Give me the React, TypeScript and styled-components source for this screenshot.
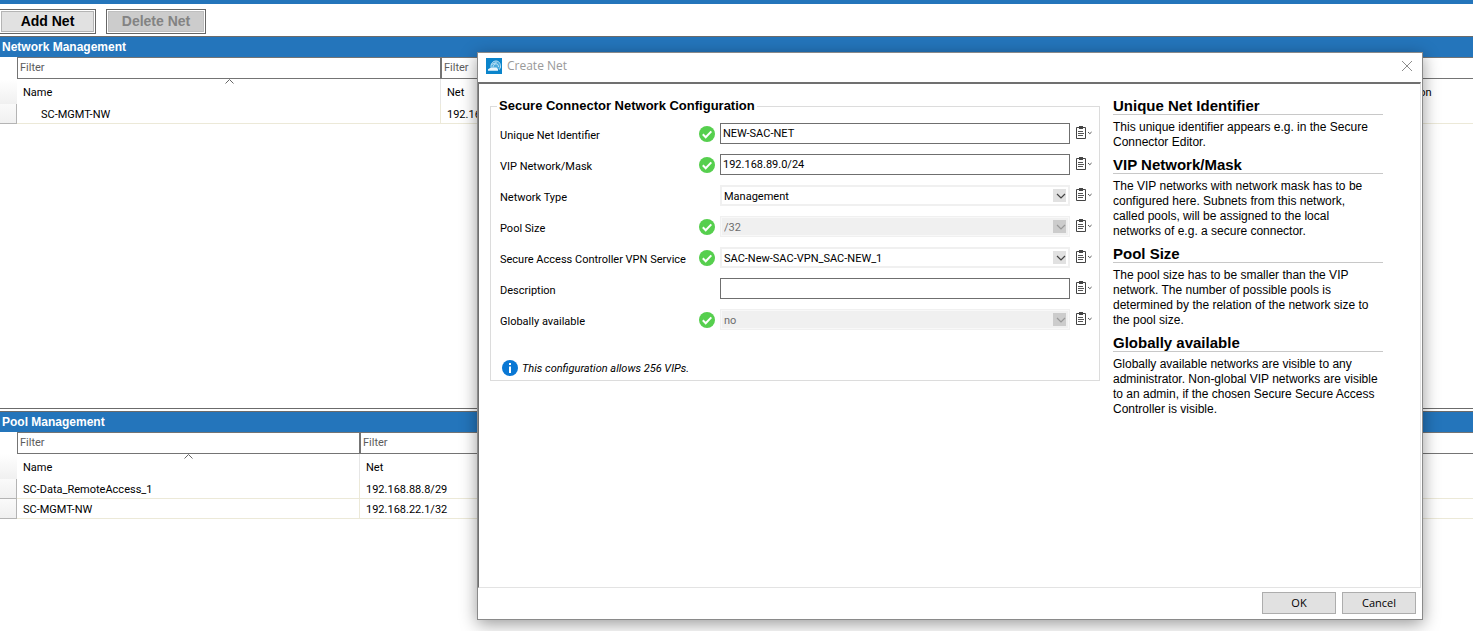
import React from "react";
import styled, { createGlobalStyle, css } from "styled-components";

const UI = `Roboto, "Liberation Sans", sans-serif`;
const HELP = `"Liberation Sans", Arial, sans-serif`;
const SYSTEM = `"Open Sans", "Noto Sans", sans-serif`;

const GlobalStyle = createGlobalStyle`
  *, *::before, *::after { box-sizing: border-box; }
  body { margin: 0; background: #fff; color: #000; font: 11px/15px ${UI}; overflow: hidden; }
  button, input, select { font: inherit; color: inherit; margin: 0; border-radius: 0; }
  table { border-collapse: separate; border-spacing: 0; }
`;

const Page = styled.div`
  position: relative;
  min-height: 100vh;
  display: flex;
  flex-direction: column;
  border-top: 4px solid #2475bb;
`;

const Toolbar = styled.header`
  display: flex;
  gap: 10px;
  height: 32px;
  padding: 5px 0 2px;
`;

const ToolButton = styled.button<{ $first?: boolean }>`
  width: ${(p) => (p.$first ? 96 : 100)}px;
  padding: 0 0 1px;
  border: 1px solid #666;
  border-left-width: ${(p) => (p.$first ? 0 : 1)}px;
  background: #e1e1e1;
  box-shadow: inset 0 0 0 1px #fff, inset 0 0 0 2px #b4b4b4;
  font: bold 14px/16px ${HELP};
  &:disabled { background: #ccc; color: #838383; box-shadow: inset 0 0 0 1px #fff, inset 0 0 0 2px #bfbfbf; }
`;

const Panel = styled.section<{ $tall?: boolean }>`
  border-top: 1px solid #6b6b6b;
  ${(p) => p.$tall && css`height: 373px; border-bottom: 1px solid #6b6b6b; margin-bottom: 2px;`}
`;

const PanelTitle = styled.h2`
  margin: 0;
  height: 20px;
  padding-left: 2px;
  background: #2475bb;
  color: #fff;
  font: bold 12px/20px ${HELP};
`;

const Grid = styled.table`
  width: 100%;
  table-layout: fixed;
`;

const HandleCol = styled.col` width: 17px; `;
const Col = styled.col<{ $width?: number }>`
  ${(p) => p.$width && `width: ${p.$width}px;`}
`;

const FilterCell = styled.td` padding: 0; height: 22px; `;

const FilterInput = styled.input`
  display: block;
  width: 100%;
  height: 22px;
  padding: 0 2px 2px;
  border: 1px solid #747474;
  background: #fff;
  &::placeholder { color: #5c5c5c; opacity: 1; }
  ${FilterCell}:last-child & { border-right: 0; }
`;

const HeadHandle = styled.td`
  padding: 0;
  background: linear-gradient(#fff, #f0f0f0);
`;

const HeadCell = styled.th`
  position: relative;
  height: 25px;
  padding: 2px 6px 0;
  border-right: 1px solid #e6e6e6;
  text-align: left;
  font-weight: normal;
  &:last-child { border-right: 0; }
`;

const SortMark = styled.svg`
  position: absolute;
  top: 0;
  left: 50%;
  margin-left: -4px;
`;

const RowHandle = styled.td`
  padding: 0;
  border-right: 1px solid #b4b4b4;
  border-bottom: 1px solid #b4b4b4;
  background: linear-gradient(#fafafa, #f0f0f0);
`;

const Cell = styled.td<{ $indent?: boolean }>`
  height: 20px;
  padding: 1px 6px 0 ${(p) => (p.$indent ? 24 : 6)}px;
  border-right: 1px solid #ece9d8;
  border-bottom: 1px solid #ece9d8;
  &:last-child { border-right: 0; }
`;

const Dialog = styled.div`
  position: absolute;
  top: 48px;
  left: 477px;
  right: 50px;
  background: #fff;
  outline: 1px solid #8a8a8a;
  outline-offset: -1px;
  box-shadow: 0 4px 16px rgba(0, 0, 0, 0.4);
`;

const TitleBar = styled.div`
  display: flex;
  align-items: center;
  gap: 5px;
  height: 30px;
  padding: 0 10px 2px 9px;
  color: #999;
  font: 12px/16px ${SYSTEM};
`;

const DialogTitle = styled.h1`
  flex: 1;
  margin: 0;
  font: inherit;
`;

const CloseButton = styled.button`
  display: flex;
  padding: 0;
  border: 0;
  background: none;
`;

const DialogBody = styled.div`
  display: flex;
  align-items: flex-start;
  gap: 13px;
  min-height: 506px;
  margin: 0 2px 0 1px;
  padding: 14px 37px 0 11px;
  border: 1px solid #e3e3e3;
  border-top: 2px solid #707070;
  border-left: 1px solid #707070;
`;

const Group = styled.fieldset`
  flex: 1;
  min-width: 0;
  margin: 0;
  padding: 9px 6px 4px 9px;
  border: 1px solid #dcdcdc;
`;

const Legend = styled.legend`
  margin-left: -3px;
  padding: 0 2px;
  font: bold 13px/16px ${HELP};
`;

const Field = styled.div`
  display: grid;
  grid-template-columns: 199px 21px minmax(0, 1fr) 23px;
  align-items: center;
  height: 21px;
  margin-bottom: 10px;
`;

const FieldLabel = styled.label` padding-top: 3px; `;

const TextInput = styled.input`
  width: 100%;
  height: 21px;
  padding: 0 2px 1px;
  border: 1px solid #6f6f6f;
  background: #fff;
`;

const SelectWrap = styled.span`
  position: relative;
  display: block;
  height: 21px;
`;

const Select = styled.select`
  appearance: none;
  width: 100%;
  height: 21px;
  padding: 1px 20px 0 2px;
  border: 2px solid #f0f0f0;
  background: #fff;
  opacity: 1;
  &:disabled { border-width: 1px; padding-left: 3px; background: #f0f0f0; box-shadow: inset 0 0 0 1px #f8f8f8; color: #6d6d6d; }
`;

const Arrow = styled.span<{ $off?: boolean }>`
  position: absolute;
  top: 4px;
  right: 4px;
  display: flex;
  background: ${(p) => (p.$off ? "#ccc" : "#e1e1e1")};
  color: ${(p) => (p.$off ? "#999" : "#444")};
  pointer-events: none;
`;

const MenuButton = styled.button`
  display: flex;
  margin-left: 6px;
  padding: 0 0 2px;
  border: 0;
  background: none;
  svg { flex: none; }
`;

const Note = styled.p`
  display: flex;
  align-items: center;
  gap: 4px;
  margin: 30px 0 0 2px;
  font-style: italic;
`;

const Help = styled.aside`
  width: 270px;
  font: 12px/15px ${HELP};
`;

const HelpTitle = styled.h3`
  margin: 0 0 5px;
  border-bottom: 1px solid #c8c8c8;
  font: bold 15px/16px ${HELP};
`;

const HelpText = styled.p`
  margin: 0 0 7px;
  padding-right: 4px;
`;

const Footer = styled.footer`
  display: flex;
  justify-content: flex-end;
  gap: 6px;
  padding: 4px 7px 6px;
`;

const FooterButton = styled.button`
  width: 74px;
  height: 22px;
  padding: 0;
  border: 1px solid #adadad;
  background: #e1e1e1;
  font: 11px/16px ${SYSTEM};
`;

const AppLogo = () => (
  <svg width="16" height="16" viewBox="0 0 16 16" aria-hidden="true">
    <rect width="16" height="16" fill="#0a84cb" />
    <path d="M5 9.500C4.500 5.500 7 3 10 3s4.800 2.500 4.500 6c0 1.200-.5 2-1.500 2.500" fill="#4aaadd" stroke="#b7def3" />
    <path d="M7 9c.3-2 1.500-3.200 3-3.200S12.500 7 12.500 9M5.500 6.500l5-2" fill="none" stroke="#d8eefa" strokeWidth=".8" />
    <path d="M2 11.200L5 9.500h5.500l1.500 1.700v1.600H2z" fill="#e8f5fc" />
  </svg>
);

const Valid = () => (
  <svg width="16" height="16" viewBox="0 0 16 16" role="img" aria-label="Valid">
    <circle cx="8" cy="8" r="8" fill="#56cf4e" />
    <path d="M3.800 8.300l2.900 2.900 5.600-5.800" fill="none" stroke="#fff" strokeWidth="2" />
  </svg>
);

const Clipboard = () => (
  <svg width="17" height="14" viewBox="0 0 17 14" aria-hidden="true">
    <path d="M.5 1.500h9v11h-9z" fill="#fff" stroke="#444" />
    <path d="M3 0h4v3H3z" fill="#444" />
    <path d="M2 5.500h5M2 7.500h6M2 9.500h5" stroke="#555" />
    <path d="M12 6l1.800 1.700L15.600 6" fill="none" stroke="#555" />
  </svg>
);

const Info = () => (
  <svg width="16" height="16" viewBox="0 0 16 16" aria-hidden="true">
    <circle cx="8" cy="8" r="8" fill="#0a78d4" />
    <path d="M7 3h2v2H7zM7 6.500h2V13H7z" fill="#fff" />
  </svg>
);

const Chevron = () => (
  <svg width="13" height="13" viewBox="0 0 13 13" aria-hidden="true">
    <path d="M4 5l4 4 4-4" fill="none" stroke="currentColor" strokeWidth="1.200" />
  </svg>
);

type FieldSpec = { id: string; label: string; value: string; kind: "text" | "select"; valid?: boolean; disabled?: boolean };

const fields: FieldSpec[] = [
  { id: "identifier", label: "Unique Net Identifier", value: "NEW-SAC-NET", kind: "text", valid: true },
  { id: "vip", label: "VIP Network/Mask", value: "192.168.89.0/24", kind: "text", valid: true },
  { id: "type", label: "Network Type", value: "Management", kind: "select" },
  { id: "pool", label: "Pool Size", value: "/32", kind: "select", valid: true, disabled: true },
  { id: "service", label: "Secure Access Controller VPN Service", value: "SAC-New-SAC-VPN_SAC-NEW_1", kind: "select", valid: true },
  { id: "description", label: "Description", value: "", kind: "text" },
  { id: "global", label: "Globally available", value: "no", kind: "select", valid: true, disabled: true },
];

const help = [
  ["Unique Net Identifier", "This unique identifier appears e.g. in the Secure Connector Editor."],
  ["VIP Network/Mask", "The VIP networks with network mask has to be configured here. Subnets from this network, called pools, will be assigned to the local networks of e.g. a secure connector."],
  ["Pool Size", "The pool size has to be smaller than the VIP network. The number of possible pools is determined by the relation of the network size to the pool size."],
  ["Globally available", "Globally available networks are visible to any administrator. Non-global VIP networks are visible to an admin, if the chosen Secure Secure Access Controller is visible."],
];

type GridProps = { columns: { name: string; width?: number }[]; rows: string[][]; indent?: boolean };

const NetGrid = ({ columns, rows, indent }: GridProps) => (
  <Grid>
    <colgroup>
      <HandleCol />
      {columns.map((c) => <Col key={c.name} $width={c.width} />)}
    </colgroup>
    <thead>
      <tr>
        <FilterCell />
        {columns.map((c) => (
          <FilterCell key={c.name}><FilterInput placeholder="Filter" aria-label={`Filter ${c.name}`} /></FilterCell>
        ))}
      </tr>
      <tr>
        <HeadHandle />
        {columns.map((c, i) => (
          <HeadCell key={c.name} scope="col">
            {c.name}
            {i === 0 && (
              <SortMark width="9" height="5" viewBox="0 0 9 5" aria-hidden="true">
                <path d="M.5 4.500l4-4 4 4" fill="none" stroke="#666" />
              </SortMark>
            )}
          </HeadCell>
        ))}
      </tr>
    </thead>
    <tbody>
      {rows.map((row) => (
        <tr key={row[0]}>
          <RowHandle />
          {columns.map((c, i) => <Cell key={c.name} $indent={indent && i === 0}>{row[i]}</Cell>)}
        </tr>
      ))}
    </tbody>
  </Grid>
);

const FieldRow = ({ id, label, value, kind, valid, disabled }: FieldSpec) => (
  <Field>
    <FieldLabel htmlFor={id}>{label}</FieldLabel>
    {valid ? <Valid /> : <span />}
    {kind === "text" ? (
      <TextInput id={id} defaultValue={value} />
    ) : (
      <SelectWrap>
        <Select id={id} defaultValue={value} disabled={disabled}><option>{value}</option></Select>
        <Arrow $off={disabled}><Chevron /></Arrow>
      </SelectWrap>
    )}
    <MenuButton type="button" aria-label={`${label} options`}><Clipboard /></MenuButton>
  </Field>
);

export default function App() {
  return (
    <Page>
      <GlobalStyle />
      <Toolbar>
        <ToolButton $first>Add Net</ToolButton>
        <ToolButton disabled>Delete Net</ToolButton>
      </Toolbar>
      <Panel $tall>
        <PanelTitle>Network Management</PanelTitle>
        <NetGrid
          indent
          columns={[{ name: "Name", width: 424 }, { name: "Net" }, { name: "Description", width: 103 }]}
          rows={[["SC-MGMT-NW", "192.168.22.0/24", ""]]}
        />
      </Panel>
      <Panel>
        <PanelTitle>Pool Management</PanelTitle>
        <NetGrid
          columns={[{ name: "Name", width: 343 }, { name: "Net" }]}
          rows={[["SC-Data_RemoteAccess_1", "192.168.88.8/29"], ["SC-MGMT-NW", "192.168.22.1/32"]]}
        />
      </Panel>
      <Dialog role="dialog" aria-labelledby="dialog-title">
        <TitleBar>
          <AppLogo />
          <DialogTitle id="dialog-title">Create Net</DialogTitle>
          <CloseButton type="button" aria-label="Close">
            <svg width="12" height="12" viewBox="0 0 12 12" aria-hidden="true">
              <path d="M1 1l10 10M11 1L1 11" stroke="#8c8c8c" />
            </svg>
          </CloseButton>
        </TitleBar>
        <DialogBody>
          <Group>
            <Legend>Secure Connector Network Configuration</Legend>
            {fields.map((f) => <FieldRow key={f.id} {...f} />)}
            <Note><Info />This configuration allows 256 VIPs.</Note>
          </Group>
          <Help>
            {help.map(([title, text]) => (
              <React.Fragment key={title}>
                <HelpTitle>{title}</HelpTitle>
                <HelpText>{text}</HelpText>
              </React.Fragment>
            ))}
          </Help>
        </DialogBody>
        <Footer>
          <FooterButton type="button">OK</FooterButton>
          <FooterButton type="button">Cancel</FooterButton>
        </Footer>
      </Dialog>
    </Page>
  );
}
